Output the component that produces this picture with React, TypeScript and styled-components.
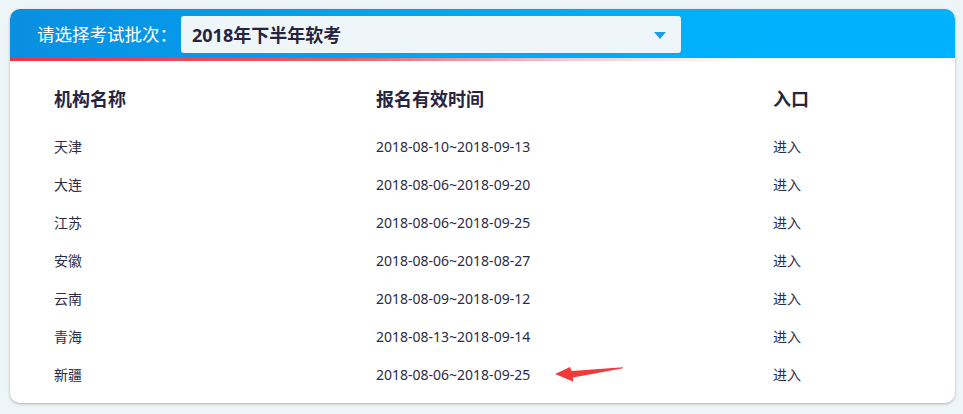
import React from "react";
import styled, { createGlobalStyle } from "styled-components";

const Global = createGlobalStyle`
  html, body { margin: 0; padding: 0; background: #eef5f8; }
  body { font-family: "Noto Sans", "Noto Sans CJK SC", sans-serif; }
`;

const Page = styled.div`
  padding: 9px 0 0 10px;
  width: 963px;
  height: 414px;
  box-sizing: border-box;
`;

const Card = styled.div`
  position: relative;
  width: 945px;
  height: 394px;
  background: #ffffff;
  border-radius: 10px;
  box-shadow: 0 1px 3px rgba(0, 0, 0, 0.28);
  overflow: hidden;
  display: flex;
  flex-direction: column;
`;

const Header = styled.div`
  height: 49px;
  display: flex;
  align-items: center;
  padding-left: 27px;
  background: linear-gradient(90deg, #0a8fe0 0%, #01a6f3 45%, #00b2fd 80%, #00b2fd 100%);
`;

const Label = styled.span`
  color: #ffffff;
  font-size: 17.5px;
  width: 144px;
  font-family: "Noto Sans CJK SC", sans-serif;
`;

const Select = styled.div`
  width: 500px;
  height: 37px;
  margin-top: 1px;
  box-sizing: border-box;
  background: #eef6f9;
  border-radius: 3px;
  display: flex;
  align-items: center;
  justify-content: space-between;
  padding: 0 15px 0 11px;
  color: #25233f;
  font-weight: 700;
  font-size: 18px;
`;

const Caret = styled.span`
  width: 0;
  height: 0;
  border-left: 6px solid transparent;
  border-right: 6px solid transparent;
  border-top: 7px solid #1b9ee6;
  margin-top: 2px;
`;

const RedLine = styled.div`
  height: 3px;
  background: linear-gradient(90deg, #e8373f 0%, #ec5c64 35%, rgba(240, 150, 160, 0.5) 60%, rgba(255, 255, 255, 0) 78%);
`;

const Table = styled.div`
  display: grid;
  grid-template-columns: 322px 397px 1fr;
  padding: 18px 0 0 44px;
`;

const HeadCell = styled.div`
  height: 38px;
  line-height: 38px;
  font-size: 18px;
  font-weight: 700;
  color: #27253f;
  margin-bottom: 11px;
  font-family: "Noto Sans CJK SC", sans-serif;
`;

const Cell = styled.div`
  height: 38px;
  line-height: 38px;
  font-size: 14px;
  color: #2c2b45;
`;

const Arrow = styled.svg`
  position: absolute;
  left: 540px;
  top: 353px;
  width: 80px;
  height: 24px;
`;

const rows: [string, string][] = [
  ["天津", "2018-08-10~2018-09-13"],
  ["大连", "2018-08-06~2018-09-20"],
  ["江苏", "2018-08-06~2018-09-25"],
  ["安徽", "2018-08-06~2018-08-27"],
  ["云南", "2018-08-09~2018-09-12"],
  ["青海", "2018-08-13~2018-09-14"],
  ["新疆", "2018-08-06~2018-09-25"],
];

export default function App() {
  return (
    <Page>
      <Global />
      <Card>
        <Header>
          <Label>请选择考试批次：</Label>
          <Select>
            <span>2018年下半年软考</span>
            <Caret />
          </Select>
        </Header>
        <RedLine />
        <Table>
          <HeadCell>机构名称</HeadCell>
          <HeadCell>报名有效时间</HeadCell>
          <HeadCell>入口</HeadCell>
          {rows.map(([name, date]) => (
            <React.Fragment key={name}>
              <Cell>{name}</Cell>
              <Cell>{date}</Cell>
              <Cell>进入</Cell>
            </React.Fragment>
          ))}
        </Table>
        <Arrow viewBox="0 0 80 24">
          <polygon
            points="5,12 20,5 21.5,9 73,5.2 73,6.2 23,15.5 23,19.5"
            fill="#f23a3a"
          />
        </Arrow>
      </Card>
    </Page>
  );
}
